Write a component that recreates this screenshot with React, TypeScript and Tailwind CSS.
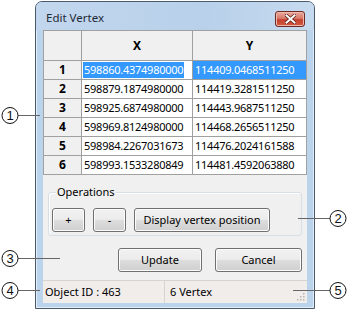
import React from "react";

const rows = [
  ["598860.4374980000", "114409.0468511250"],
  ["598879.1874980000", "114419.3281511250"],
  ["598925.6874980000", "114443.9687511250"],
  ["598969.8124980000", "114468.2656511250"],
  ["598984.2267031673", "114476.2024161588"],
  ["598993.1533280849", "114481.4592063880"],
];

const font = { fontFamily: '"Noto Sans", "Open Sans", sans-serif' };

function Btn({ w, children }: { w: string; children: React.ReactNode }) {
  return (
    <div
      className={`${w} h-[24px] flex items-center justify-center rounded-[3px] border border-[#707070] bg-[linear-gradient(#f2f2f2_0%,#ebebeb_50%,#dddddd_51%,#cfcfcf_100%)] text-[11px] text-black shadow-[inset_0_0_0_1px_#fcfcfc]`}
    >
      {children}
    </div>
  );
}

function Callout({ n, cx, cy }: { n: number; cx: number; cy: number }) {
  return (
    <g>
      <circle cx={cx} cy={cy} r={8} fill="white" stroke="#111" strokeWidth={1} />
      <text x={cx} y={cy + 4.5} textAnchor="middle" fontSize={13} fontFamily="Liberation Sans, Arial, sans-serif" fill="#111">
        {n}
      </text>
    </g>
  );
}

export default function App() {
  return (
    <div className="relative w-[347px] h-[309px] bg-white overflow-hidden" style={font}>
      <div className="ml-[35px] mt-[1px] w-[280px] h-[308px] flex flex-col border border-[#4b5a6b] rounded-t-[7px] bg-[#bcd3ec] shadow-[inset_0_0_0_1px_#e2edf8]">
        {/* title bar */}
        <div className="h-[28px] flex items-center justify-between pl-[10px] pr-[9px] rounded-t-[6px] bg-[linear-gradient(90deg,#c2d7ee,#b8d0ea_60%,#c6daef)]">
          <span className="text-[11.5px] text-[#1e2a36] leading-none mt-[4px]">Edit Vertex</span>
          <div className="w-[30px] h-[16px] mt-[6px] rounded-[3px] border border-[#6d2a22] bg-[linear-gradient(#e9a99c_0%,#d77a6a_45%,#c4412f_55%,#d25a42_100%)] flex items-center justify-center shadow-[inset_0_0_0_1px_#f0b8ac]">
            <svg width="11" height="10" viewBox="0 0 11 10">
              <path d="M1.5 1.5 L9.5 8.5 M9.5 1.5 L1.5 8.5" stroke="#5a1a12" strokeWidth="3.4" strokeLinecap="square" />
              <path d="M1.5 1.5 L9.5 8.5 M9.5 1.5 L1.5 8.5" stroke="#ffffff" strokeWidth="2" strokeLinecap="square" />
            </svg>
          </div>
        </div>
        {/* content */}
        <div className="mx-[7px] w-[264px] h-[273px] flex flex-col bg-[#f0f0f0]">
          {/* grid */}
          <div className="border-t border-l border-[#a0a0a0] bg-white">
            <div className="grid grid-cols-[38px_111px_114px]">
              <div className="h-[30px] border-r border-b border-[#a0a0a0] bg-[#f0f0f0]" />
              <div className="h-[30px] border-r border-b border-[#a0a0a0] bg-[#f0f0f0] flex items-center justify-center text-[12px] font-bold text-black">X</div>
              <div className="h-[30px] border-r border-b border-[#a0a0a0] bg-[#f0f0f0] flex items-center justify-center text-[12px] font-bold text-black">Y</div>
              {rows.map((r, i) => (
                <React.Fragment key={i}>
                  <div className="h-[19px] border-r border-b border-[#a0a0a0] bg-[#f0f0f0] flex items-center justify-center text-[12px] font-bold text-black">
                    {i + 1}
                  </div>
                  <div className="h-[19px] border-r border-b border-[#a0a0a0] flex items-center pl-[1px] text-[11px] tracking-[-0.25px] text-black">
                    {i === 0 ? <span className="bg-[#3399ff] text-white px-[1px]">{r[0]}</span> : <span className="px-[1px]">{r[0]}</span>}
                  </div>
                  <div
                    className={`h-[19px] border-r border-b border-[#a0a0a0] flex items-center pl-[2px] text-[11px] tracking-[-0.25px] ${
                      i === 0 ? "bg-[#3399ff] text-white" : "text-black"
                    }`}
                  >
                    {r[1]}
                  </div>
                </React.Fragment>
              ))}
            </div>
          </div>
          {/* operations group */}
          <div className="relative mt-[17px] mx-[5px] h-[45px] border border-[#d5dfe5] rounded-[3px] shadow-[inset_1px_1px_0_#fff]">
            <span className="absolute -top-[10px] left-[7px] px-[1px] bg-[#f0f0f0] text-[11px] text-black leading-[18px]">Operations</span>
            <div className="flex gap-[8px] pl-[3px] pt-[15px]">
              <Btn w="w-[33px]">+</Btn>
              <Btn w="w-[33px]">-</Btn>
              <Btn w="w-[136px]">Display vertex position</Btn>
            </div>
          </div>
          {/* update/cancel */}
          <div className="mt-[12px] flex justify-end gap-[13px] pr-[5px]">
            <Btn w="w-[84px]">Update</Btn>
            <Btn w="w-[87px]">Cancel</Btn>
          </div>
          {/* status bar */}
          <div className="mt-[8px] h-[23px] border-t border-[#d7d3cf] bg-[#f1edea] flex items-center text-[11px] text-black relative">
            <div className="w-[122px] h-full flex items-center pl-[2px] border-r border-[#d7d3cf]">Object ID : 463</div>
            <div className="pl-[5px]">6 Vertex</div>
            <svg className="absolute right-[2px] bottom-[2px]" width="10" height="10" viewBox="0 0 10 10">
              {[[8, 2], [8, 5], [5, 5], [8, 8], [5, 8], [2, 8]].map(([x, y], k) => (
                <rect key={k} x={x} y={y} width="1.5" height="1.5" fill="#b8b4b0" />
              ))}
            </svg>
          </div>
        </div>
      </div>
      {/* callouts overlay */}
      <svg className="absolute left-0 top-0 pointer-events-none" width="347" height="309">
        <line x1="18" y1="115.5" x2="40" y2="115.5" stroke="#666" strokeWidth="1" />
        <line x1="298" y1="218.5" x2="330" y2="218.5" stroke="#666" strokeWidth="1" />
        <line x1="18" y1="258.5" x2="60" y2="258.5" stroke="#666" strokeWidth="1" />
        <line x1="18" y1="290.5" x2="40" y2="290.5" stroke="#666" strokeWidth="1" />
        <line x1="293" y1="290.5" x2="330" y2="290.5" stroke="#666" strokeWidth="1" />
        <Callout n={1} cx={10} cy={115.5} />
        <Callout n={2} cx={338} cy={218.5} />
        <Callout n={3} cx={10} cy={258.5} />
        <Callout n={4} cx={10} cy={290.5} />
        <Callout n={5} cx={338} cy={290.5} />
      </svg>
    </div>
  );
}
